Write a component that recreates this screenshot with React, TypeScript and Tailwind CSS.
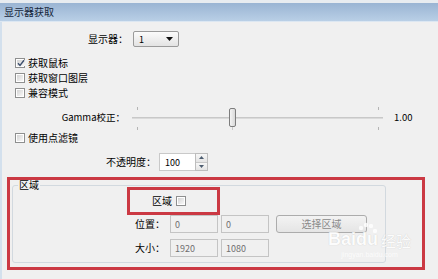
import React from "react";

function Box({ checked }: { checked?: boolean }) {
  return (
    <span className="w-[10px] h-[10px] border border-[#8e8f8f] bg-white p-px flex shrink-0">
      <span className="flex-1 bg-linear-to-br from-[#d4d4d4] to-[#f8f8f8] flex items-center justify-center">
        {checked && (
          <svg width="8" height="8" viewBox="0 0 8 8">
            <path d="M1 4.2 L3 6.4 L7 1.2" fill="none" stroke="#3d4f6e" strokeWidth="1.4" />
          </svg>
        )}
      </span>
    </span>
  );
}

function CheckRow({ label, checked }: { label: string; checked?: boolean }) {
  return (
    <div className="h-[15px] flex items-center pl-[13px] gap-[3px]">
      <Box checked={checked} />
      <span>{label}</span>
    </div>
  );
}

function Field({ value, w }: { value: string; w: string }) {
  return (
    <div className={`${w} h-[18px] border border-[#c4c4c4] bg-[#f0f0f0] flex items-center pl-[4px] text-[9px] text-[#6f6f6f]`}>
      {value}
    </div>
  );
}

export default function App() {
  return (
    <div
      className="w-[438px] h-[279px] bg-[#f0f0f0] relative overflow-hidden flex flex-col text-[10px] leading-none text-black"
      style={{ fontFamily: '"Noto Sans CJK SC", "Noto Sans", sans-serif' }}
    >
      <div className="h-[3px] bg-[#e8ecf0]" />
      <div className="h-[18px] bg-linear-to-b from-[#9ab4d3] to-[#b9cfe6] flex items-center pl-[4px] text-[#16263b]">
        显示器获取
      </div>
      <div className="h-px bg-[#dce7f2]" />
      <div className="flex-1 flex flex-col border-l-[2px] border-[#d3e0ed]">
        {/* monitor select */}
        <div className="mt-[9px] h-[16px] flex items-center">
          <div className="w-[126px] text-right">显示器：</div>
          <div className="ml-[5px] w-[46px] h-[16px] border border-[#9a9a9a] rounded-[2px] bg-linear-to-b from-[#fbfbfb] to-[#e3e3e3] flex items-center justify-between pl-[5px] pr-[5px]">
            <span className="text-[9px]">1</span>
            <svg width="7" height="4" viewBox="0 0 7 4">
              <path d="M0 0 H7 L3.5 4 Z" fill="#111" />
            </svg>
          </div>
        </div>

        <div className="mt-[8px] flex flex-col">
          <CheckRow label="获取鼠标" checked />
          <CheckRow label="获取窗口图层" />
          <CheckRow label="兼容模式" />
        </div>

        {/* gamma */}
        <div className="mt-[6px] h-[24px] flex items-center">
          <div className="w-[123px] text-right text-[9.5px]">Gamma校正：</div>
          <div className="ml-[7px] w-[251px] h-full relative">
            <div className="absolute left-0 right-0 top-[11px] h-[2px] bg-[#dadada] border-t border-[#c8c8c8]" />
            <div className="absolute left-[5px] top-[1px] w-px h-[3px] bg-[#b5b5b5]" />
            <div className="absolute left-[5px] top-[21px] w-px h-[3px] bg-[#b5b5b5]" />
            <div className="absolute left-[246px] top-[1px] w-px h-[3px] bg-[#b5b5b5]" />
            <div className="absolute left-[246px] top-[21px] w-px h-[3px] bg-[#b5b5b5]" />
            <div className="absolute left-[100px] top-[21px] w-px h-[3px] bg-[#c9c9c9]" />
            <div className="absolute left-[97px] top-[2px] w-[7px] h-[19px] border border-[#7d7d7d] rounded-[2px] bg-linear-to-r from-[#f4f4f4] to-[#d9d9d9]" />
          </div>
          <div className="ml-[11px] text-[9.5px]">1.00</div>
        </div>

        <CheckRow label="使用点滤镜" />

        {/* opacity */}
        <div className="mt-[8px] h-[18px] flex items-center">
          <div className="w-[154px] text-right">不透明度：</div>
          <div className="ml-[3px] h-[18px] flex">
            <div className="w-[36px] h-full border border-[#c9c9c9] border-r-0 bg-white flex items-center pl-[5px] text-[9px]">
              100
            </div>
            <div className="w-[13px] h-full flex flex-col border border-[#bdbdbd] bg-[#ececec]">
              <div className="flex-1 border-b border-[#c8c8c8] flex items-center justify-center bg-linear-to-b from-[#f7f7f7] to-[#e4e4e4]">
                <svg width="5" height="3" viewBox="0 0 5 3">
                  <path d="M0 3 H5 L2.5 0 Z" fill="#4d5d70" />
                </svg>
              </div>
              <div className="flex-1 flex items-center justify-center bg-linear-to-b from-[#f7f7f7] to-[#e4e4e4]">
                <svg width="5" height="3" viewBox="0 0 5 3">
                  <path d="M0 0 H5 L2.5 3 Z" fill="#4d5d70" />
                </svg>
              </div>
            </div>
          </div>
        </div>

        {/* highlighted region */}
        <div className="mt-[6px] ml-[5px] w-[418px] h-[93px] border-[3px] border-[#cb3943] flex flex-col">
          <fieldset className="ml-[2px] w-[374px] h-[83px] border border-[#d2d9df] rounded-[3px] pl-[5px] flex flex-col">
            <legend className="px-[1px] leading-[10px]">区域</legend>
            <div className="-mt-[3px] ml-[109px] w-[93px] h-[28px] border-[3px] border-[#cb3943] flex items-center pl-[22px] gap-[4px]">
              <span>区域</span>
              <Box />
            </div>
            <div className="h-[18px] flex items-center">
              <div className="w-[147px] text-right">位置：</div>
              <div className="ml-[5px]">
                <Field value="0" w="w-[48px]" />
              </div>
              <div className="ml-[3px]">
                <Field value="0" w="w-[48px]" />
              </div>
              <div className="ml-[7px] w-[91px] h-[18px] border border-[#acacac] rounded-[3px] bg-linear-to-b from-[#f3f3f3] to-[#e5e5e5] flex items-center justify-center text-[#8a8a8a]">
                选择区域
              </div>
            </div>
            <div className="mt-[6px] h-[18px] flex items-center">
              <div className="w-[147px] text-right">大小：</div>
              <div className="ml-[5px]">
                <Field value="1920" w="w-[48px]" />
              </div>
              <div className="ml-[3px]">
                <Field value="1080" w="w-[48px]" />
              </div>
            </div>
          </fieldset>
        </div>
      </div>

      {/* watermark */}
      <div className="absolute left-[328px] top-[230px] flex flex-col items-center opacity-80 pointer-events-none">
        <div className="flex items-end text-white text-[18px] font-bold leading-none" style={{ fontFamily: '"Liberation Sans", sans-serif', textShadow: "0 0 1px #bbb" }}>
          <span>Bai</span>
          <span className="relative">
            <svg width="22" height="20" viewBox="0 0 22 20" className="absolute left-0 -top-[8px]">
              <circle cx="5" cy="6" r="2.2" fill="#fff" />
              <circle cx="10" cy="3" r="2.2" fill="#fff" />
              <circle cx="15" cy="4" r="2.2" fill="#fff" />
              <circle cx="19" cy="9" r="2.2" fill="#fff" />
            </svg>
            <span>du</span>
          </span>
          <span className="ml-[3px] text-[15px] font-normal" style={{ fontFamily: '"Noto Sans CJK SC", sans-serif' }}>经验</span>
        </div>
        <div className="text-[7px] text-white mt-[3px]" style={{ fontFamily: '"Liberation Sans", sans-serif' }}>jingyan.baidu.com</div>
      </div>
    </div>
  );
}
